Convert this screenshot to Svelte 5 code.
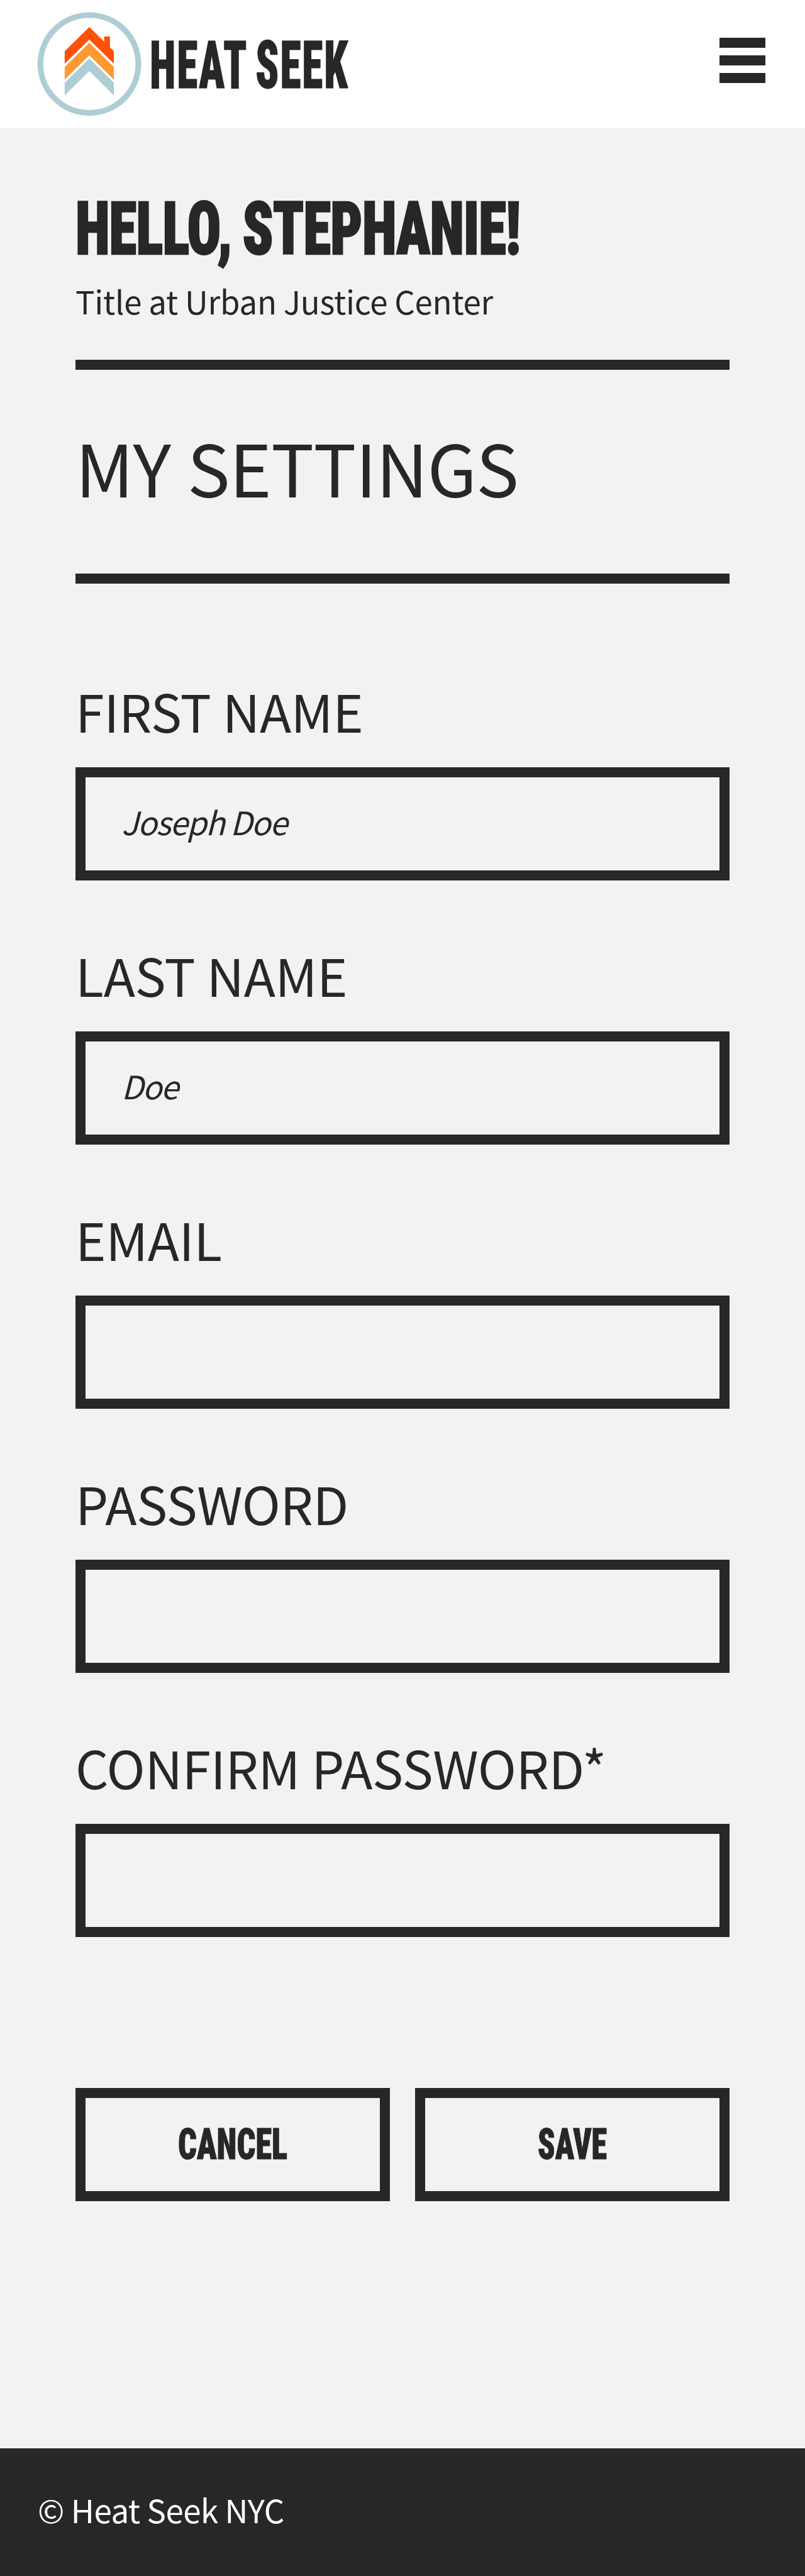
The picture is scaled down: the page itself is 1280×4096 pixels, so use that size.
<script>
  const fields = [
    { id: 'first', label: 'FIRST NAME', type: 'text', hint: 'Joseph Doe' },
    { id: 'last', label: 'LAST NAME', type: 'text', hint: 'Doe' },
    { id: 'email', label: 'EMAIL', type: 'email', hint: '' },
    { id: 'password', label: 'PASSWORD', type: 'password', hint: '' },
    { id: 'confirm', label: 'CONFIRM PASSWORD*', type: 'password', hint: '' }
  ];
</script>

<header>
  <svg class="logo" viewBox="0 0 800 204" role="img" aria-label="Heat Seek">
    <g transform="scale(0.96024)">
      <ellipse cx="148" cy="106" rx="81.1" ry="81" fill="none" stroke="#aecdd5" stroke-width="9.5" />
      <path fill="#fd510b" d="M107.1 85 147.9 44.7 172.5 69V60.5H182.1V78.7L188.6 85V105.5L147.9 65.5 107.1 105.5Z" />
      <path fill="#fe9a33" d="M107.1 111 147.9 70.7 188.6 111V132L147.9 91.7 107.1 132Z" />
      <path fill="#aecdd5" d="M107.1 137 147.9 96.8 188.6 137V158L147.9 117.6 107.1 158Z" />
    </g>
    <text class="condensed brand" x="238" y="140.2" textLength="317" lengthAdjust="spacingAndGlyphs">HEAT SEEK</text>
  </svg>
  <button class="menu" aria-label="Menu"><i></i><i></i><i></i></button>
</header>

<main>
  <svg class="greeting" viewBox="0 0 1040 244" role="img" aria-label="Hello, Stephanie!">
    <text class="condensed hello" x="0" y="200.2" textLength="707" lengthAdjust="spacingAndGlyphs">HELLO, STEPHANIE!</text>
  </svg>
  <p class="role">Title at Urban Justice Center</p>
  <hr />
  <h2>MY SETTINGS</h2>
  <hr />
  <form>
    {#each fields as f (f.id)}
      <div class="field">
        <label for={f.id}>{f.label}</label>
        <input id={f.id} type={f.type} placeholder={f.hint} />
      </div>
    {/each}
    <div class="actions">
      <button type="button">
        <svg viewBox="0 0 468 148"><text class="condensed action" x="147" y="96.5" textLength="174" lengthAdjust="spacingAndGlyphs">CANCEL</text></svg>
      </button>
      <button type="button">
        <svg viewBox="0 0 468 148"><text class="condensed action" x="179" y="96.5" textLength="110" lengthAdjust="spacingAndGlyphs">SAVE</text></svg>
      </button>
    </div>
  </form>
</main>

<footer>© Heat Seek NYC</footer>

<style>
  :global(body) {
    background: #f2f2f2;
    color: #262729;
    font-family: 'Noto Sans CJK SC', 'Noto Sans', sans-serif;
  }
  :global(#app) {
    height: 4096px;
    display: flex;
    flex-direction: column;
  }
  header {
    flex: none;
    height: 204px;
    background: #fff;
    display: flex;
    justify-content: space-between;
    padding-right: 63.5px;
  }
  .logo {
    width: 800px;
    height: 204px;
  }
  .condensed {
    font-family: Roboto, sans-serif;
    font-weight: 900;
    font-stretch: 75%;
    fill: #262729;
    stroke: #262729;
  }
  .brand {
    font-size: 106px;
    letter-spacing: 3px;
    word-spacing: -6px;
    stroke-width: 1px;
  }
  .hello {
    font-size: 117px;
    letter-spacing: -1px;
    word-spacing: -4px;
    stroke-width: 2.5px;
  }
  .action {
    font-size: 68px;
    stroke-width: 1px;
  }
  button {
    border: 0;
    padding: 0;
    background: none;
  }
  .menu {
    display: flex;
    flex-direction: column;
    gap: 11.5px;
    padding-top: 59.8px;
  }
  .menu i {
    width: 72.5px;
    height: 16.4px;
    background: #262729;
  }
  main {
    flex: 1;
    min-height: 0;
    padding: 0 120px;
  }
  .greeting {
    display: block;
    width: 1040px;
    height: 244px;
  }
  .role {
    margin: 0 0 64px;
    font-size: 51px;
    line-height: 60px;
    letter-spacing: -0.0055em;
  }
  hr {
    height: 16px;
    margin: 0;
    border: 0;
    background: #262729;
  }
  h2 {
    margin: 0 0 17px;
    font-size: 114px;
    font-weight: 400;
    line-height: 307px;
    letter-spacing: -0.0085em;
    word-spacing: 2px;
  }
  form {
    padding-top: 151px;
  }
  .field {
    display: flex;
    flex-direction: column;
    gap: 41px;
    margin-bottom: 99px;
  }
  label {
    font-size: 82.5px;
    line-height: 100px;
    letter-spacing: -0.005em;
  }
  input {
    box-sizing: border-box;
    width: 100%;
    height: 180px;
    margin: 0;
    padding: 0 57px 9px;
    border: 16px solid #262729;
    border-radius: 0;
    background: transparent;
    font: italic 400 51px/60px 'Noto Sans CJK SC', sans-serif;
    letter-spacing: -1.6px;
  }
  input::placeholder {
    color: #262729;
    opacity: 1;
  }
  .actions {
    display: grid;
    grid-template-columns: 1fr 1fr;
    gap: 40px;
    padding-top: 141px;
  }
  .actions button {
    height: 180px;
    border: 16px solid #262729;
  }
  .actions svg {
    display: block;
    width: 468px;
    height: 148px;
  }
  footer {
    flex: none;
    height: 203px;
    padding-left: 60px;
    background: #262729;
    color: #fff;
    font-size: 51px;
    line-height: 194px;
    letter-spacing: -0.5px;
  }
</style>
